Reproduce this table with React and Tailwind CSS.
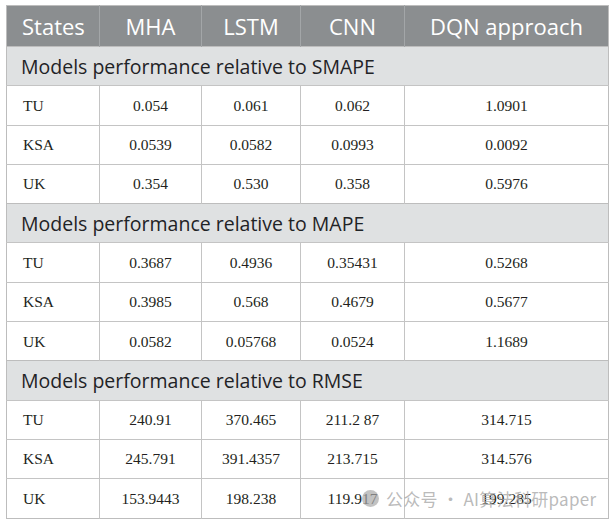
const sections = [
  {
    title: 'Models performance relative to SMAPE',
    rows: [
      ['TU', '0.054', '0.061', '0.062', '1.0901'],
      ['KSA', '0.0539', '0.0582', '0.0993', '0.0092'],
      ['UK', '0.354', '0.530', '0.358', '0.5976'],
    ],
  },
  {
    title: 'Models performance relative to MAPE',
    rows: [
      ['TU', '0.3687', '0.4936', '0.35431', '0.5268'],
      ['KSA', '0.3985', '0.568', '0.4679', '0.5677'],
      ['UK', '0.0582', '0.05768', '0.0524', '1.1689'],
    ],
  },
  {
    title: 'Models performance relative to RMSE',
    rows: [
      ['TU', '240.91', '370.465', '211.2 87', '314.715'],
      ['KSA', '245.791', '391.4357', '213.715', '314.576'],
      ['UK', '153.9443', '198.238', '119.917', '199.285'],
    ],
  },
]

const headers = ['States', 'MHA', 'LSTM', 'CNN', 'DQN approach']

export default function App() {
  return (
    <div className="relative w-[616px] h-[522px] bg-white pt-[5px] pl-[6px]">
      <table className="w-[603px] border-collapse border border-[#bdbdbd] table-fixed">
        <colgroup>
          <col className="w-[93px]" />
          <col className="w-[102px]" />
          <col className="w-[99px]" />
          <col className="w-[104px]" />
          <col />
        </colgroup>
        <thead>
          <tr className="h-[41px] bg-[#8b8e90] text-white text-[22px] [font-family:'Open_Sans',sans-serif]">
            {headers.map((h, i) => (
              <th
                key={h}
                className={`font-normal border-l border-[#a3a6a8] first:border-l-0 ${i === 0 ? 'text-left pl-[15px]' : 'text-center'}`}
              >
                {h}
              </th>
            ))}
          </tr>
        </thead>
        {sections.map((s) => (
          <tbody key={s.title}>
            <tr className="h-[39.3px] bg-[#dfe1e2] border-t border-[#bdbdbd]">
              <td colSpan={5} className="pl-[14px] text-[19.5px] text-[#1f2326] [font-family:'Open_Sans',sans-serif]">
                {s.title}
              </td>
            </tr>
            {s.rows.map((r) => (
              <tr key={r[0]} className="h-[39.3px] border-t border-[#c4c4c4]">
                {r.map((c, i) => (
                  <td
                    key={i}
                    className={`border-l border-[#c4c4c4] first:border-l-0 text-[15.5px] text-[#231f20] [font-family:'Liberation_Serif',serif] ${i === 0 ? 'text-left pl-[16px]' : 'text-center'}`}
                  >
                    {c}
                  </td>
                ))}
              </tr>
            ))}
          </tbody>
        ))}
      </table>

      {/* watermark */}
      <div className="absolute left-[362px] top-[486px] flex items-center gap-[7px] text-[#a8a8a8]/80 [font-family:'Noto_Sans_CJK_SC','Noto_Sans',sans-serif] text-[17px] tracking-[0.3px] pointer-events-none">
        <span className="w-[17px] h-[17px] rounded-full bg-[#a8a8a8]/70" />
        <span>公众号 · AI算法科研paper</span>
      </div>
    </div>
  )
}
